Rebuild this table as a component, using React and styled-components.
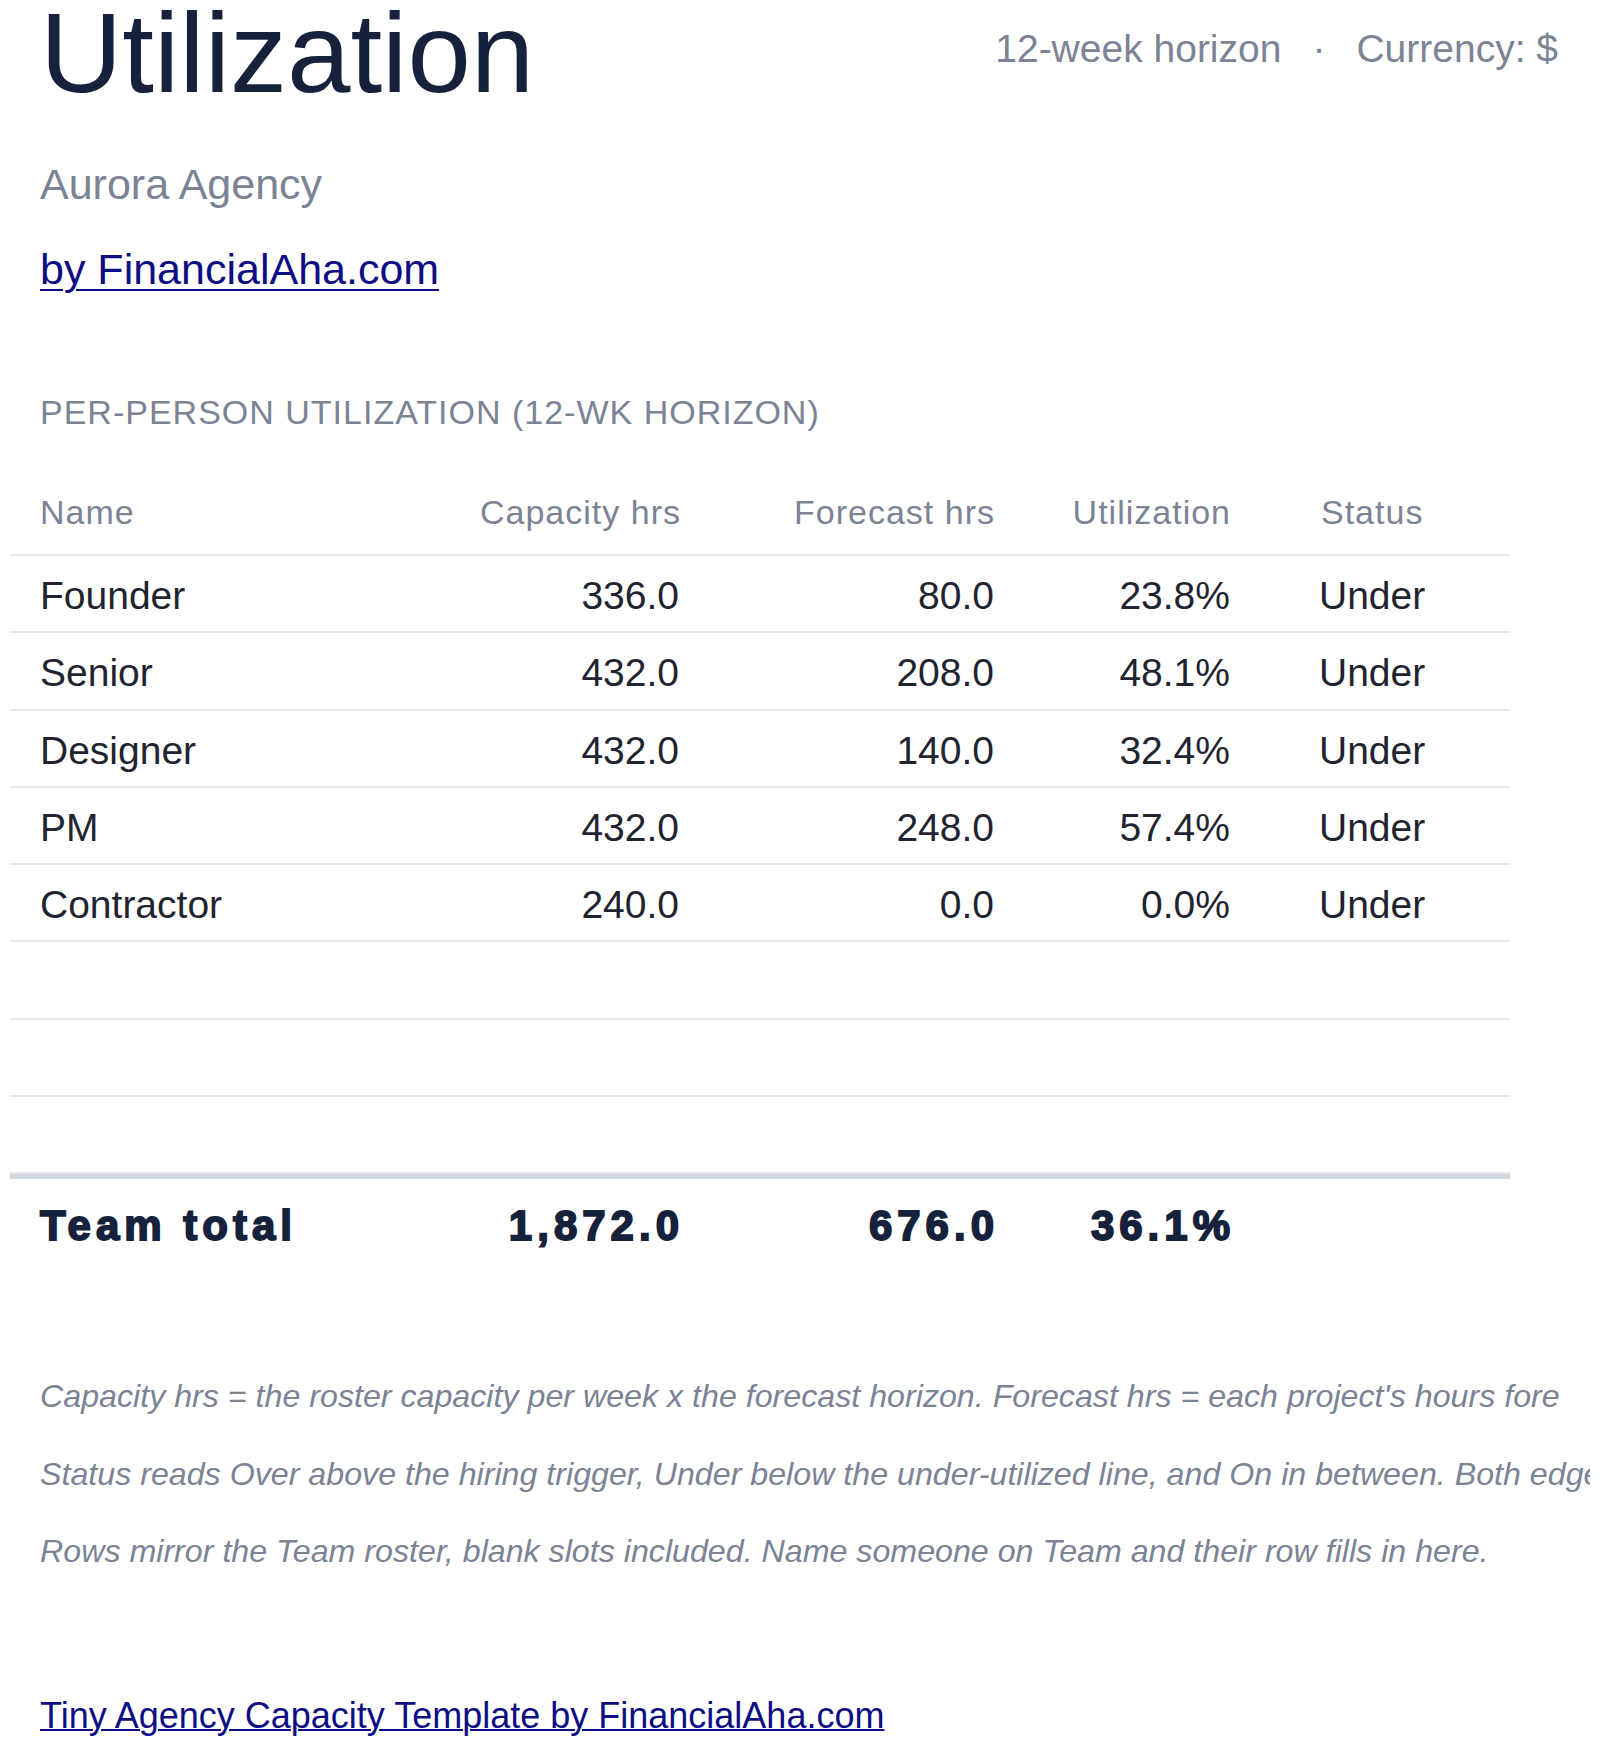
import React from 'react';
import styled, { createGlobalStyle, css } from 'styled-components';

const GlobalStyle = createGlobalStyle`
  html, body { margin: 0; padding: 0; background: #ffffff; }
  body { font-family: "Liberation Sans", Arial, Helvetica, sans-serif; }
`;

const ink = '#16213b';
const body = '#1f2430';
const muted = '#7b8394';
const link = '#0e0e84';

const Page = styled.main`
  width: 1600px;
  box-sizing: border-box;
  padding: 0 42px 10px 40px;
`;

const Header = styled.header`
  display: flex;
  justify-content: space-between;
  align-items: flex-start;
`;

const Title = styled.h1`
  margin: 0;
  font-size: 114px;
  line-height: 106px;
  font-weight: 400;
  color: ${ink};
`;

const Meta = styled.div`
  margin-top: 26px;
  display: flex;
  gap: 31px;
  font-size: 39px;
  line-height: 45px;
  color: ${muted};
  white-space: nowrap;
`;

const Org = styled.div`
  margin-top: 54px;
  font-size: 43px;
  line-height: 48px;
  color: ${muted};
`;

const ByLine = styled.div`
  margin-top: 37px;
  font-size: 43px;
  line-height: 48px;
`;

const Link = styled.a`
  color: ${link};
  text-decoration: underline;
  text-decoration-thickness: 2px;
  text-underline-offset: 5px;
`;

const SectionTitle = styled.h2`
  margin: 99px 0 0;
  font-size: 34px;
  line-height: 40px;
  font-weight: 400;
  letter-spacing: 1px;
  text-transform: uppercase;
  color: ${muted};
`;

const Table = styled.div`
  width: 1500px;
  margin: 60px 0 0 -30px;
`;

const Row = styled.div`
  display: grid;
  grid-template-columns: 470px 199px 315px 236px 1fr;
  box-sizing: border-box;
  white-space: nowrap;

  ${(p) =>
    p.$kind === 'head' &&
    css`
      padding-bottom: 22px;
      border-bottom: 2px solid #e7e9ee;
      font-size: 34px;
      line-height: 40px;
      letter-spacing: 1px;
      color: ${muted};
    `}

  ${(p) =>
    p.$kind === 'body' &&
    css`
      height: 77.3px;
      padding-top: 4px;
      align-items: center;
      border-bottom: 2px solid #e7e9ee;
      font-size: 39px;
      line-height: 45px;
      color: ${body};
      &:last-child {
        height: 74.5px;
        border-bottom: none;
      }
    `}

  ${(p) =>
    p.$kind === 'total' &&
    css`
      border-top: 5px solid #d3d7df;
      padding-top: 22px;
      font-size: 42px;
      line-height: 50px;
      font-weight: 700;
      letter-spacing: 5px;
      -webkit-text-stroke: 1.8px ${ink};
      color: ${ink};
    `}
`;

const NameCell = styled.div`
  padding-left: 30px;
`;

const NumCell = styled.div`
  text-align: right;
  margin-right: ${(p) => (p.$trail ? `-${p.$trail}px` : '0')};
`;

const StatusCell = styled.div`
  padding-left: ${(p) => (p.$head ? 91 : 89)}px;
`;

const Notes = styled.section`
  margin: 125px -32px 0 0;
  overflow: hidden;
`;

const Note = styled.p`
  margin: 0;
  white-space: nowrap;
  font-size: 32.2px;
  line-height: 40px;
  font-style: italic;
  color: ${muted};
  & + & {
    margin-top: 37.4px;
  }
`;

const Footer = styled.footer`
  margin-top: 125px;
  font-size: 36px;
  line-height: 40px;
`;

const FooterLink = styled.a`
  color: ${link};
  text-decoration: underline;
  text-decoration-thickness: 2px;
`;

const people = [
  { name: 'Founder', cap: '336.0', fc: '80.0', util: '23.8%', status: 'Under' },
  { name: 'Senior', cap: '432.0', fc: '208.0', util: '48.1%', status: 'Under' },
  { name: 'Designer', cap: '432.0', fc: '140.0', util: '32.4%', status: 'Under' },
  { name: 'PM', cap: '432.0', fc: '248.0', util: '57.4%', status: 'Under' },
  { name: 'Contractor', cap: '240.0', fc: '0.0', util: '0.0%', status: 'Under' },
  { name: '', cap: '', fc: '', util: '', status: '' },
  { name: '', cap: '', fc: '', util: '', status: '' },
  { name: '', cap: '', fc: '', util: '', status: '' },
];

const notes = [
  "Capacity hrs = the roster capacity per week x the forecast horizon. Forecast hrs = each project's hours fore",
  'Status reads Over above the hiring trigger, Under below the under-utilized line, and On in between. Both edges',
  'Rows mirror the Team roster, blank slots included. Name someone on Team and their row fills in here.',
];

export default function App() {
  return (
    <>
      <GlobalStyle />
      <Page>
        <Header>
          <Title>Utilization</Title>
          <Meta>
            <span>12-week horizon</span>
            <span>·</span>
            <span>Currency: $</span>
          </Meta>
        </Header>
        <Org>Aurora Agency</Org>
        <ByLine>
          <Link href="#">by FinancialAha.com</Link>
        </ByLine>

        <SectionTitle>Per-person utilization (12-wk horizon)</SectionTitle>

        <Table>
          <Row $kind="head">
            <NameCell>Name</NameCell>
            <NumCell $trail={1}>Capacity hrs</NumCell>
            <NumCell $trail={1}>Forecast hrs</NumCell>
            <NumCell $trail={1}>Utilization</NumCell>
            <StatusCell $head>Status</StatusCell>
          </Row>
          {people.map((p, i) => (
            <Row $kind="body" key={i}>
              <NameCell>{p.name}</NameCell>
              <NumCell>{p.cap}</NumCell>
              <NumCell>{p.fc}</NumCell>
              <NumCell>{p.util}</NumCell>
              <StatusCell>{p.status}</StatusCell>
            </Row>
          ))}
          <Row $kind="total">
            <NameCell>Team total</NameCell>
            <NumCell $trail={5}>1,872.0</NumCell>
            <NumCell $trail={5}>676.0</NumCell>
            <NumCell $trail={5}>36.1%</NumCell>
            <StatusCell />
          </Row>
        </Table>

        <Notes>
          {notes.map((n, i) => (
            <Note key={i}>{n}</Note>
          ))}
        </Notes>

        <Footer>
          <FooterLink href="#">Tiny Agency Capacity Template by FinancialAha.com</FooterLink>
        </Footer>
      </Page>
    </>
  );
}
